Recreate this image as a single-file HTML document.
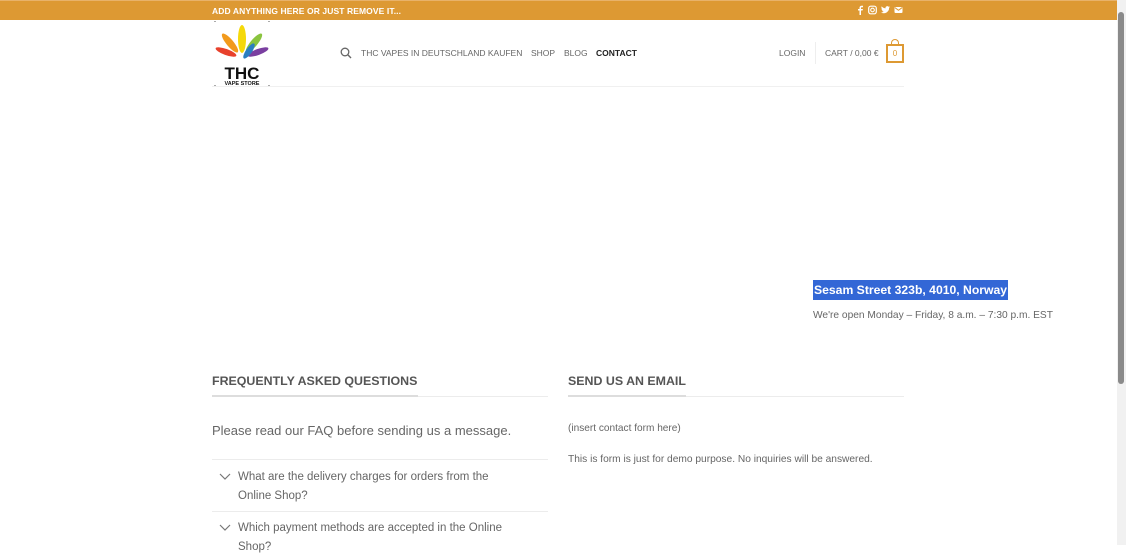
<!DOCTYPE html>
<html><head><meta charset="utf-8"><style>
*{margin:0;padding:0;box-sizing:border-box}
body{width:1126px;height:545px;overflow:hidden;background:#fff;font-family:"Liberation Sans",sans-serif;color:#777;position:relative}
.top{position:absolute;left:0;top:0;width:1117px;height:20px;background:#dd9933;border-top:1px solid #e8b26a}
.top .t{position:absolute;left:212px;top:5px;font-size:8.5px;font-weight:bold;color:#fff;letter-spacing:.1px}
.soc{position:absolute;left:856px;top:4px;display:flex;gap:4px}
.abs{position:absolute;white-space:nowrap}
.nav{font-size:8.5px;color:#666;top:48px}
.sb{position:absolute;left:1117px;top:0;width:9px;height:545px;background:#f1f1f1}
.sb i{position:absolute;left:1px;top:12px;width:6px;height:372px;background:#8a8a8a;border-radius:3px}
</style></head><body>
<div class="top"><div class="t">ADD ANYTHING HERE OR JUST REMOVE IT...</div>
<div class="soc">
<svg width="8" height="10" viewBox="0 0 8 10"><path d="M5 10V5.5h1.5L7 4H5V3c0-.5.2-.8.8-.8H7V.8C6.7.8 6.2.7 5.6.7 4.3.7 3.5 1.5 3.5 2.8V4H2v1.5h1.5V10z" fill="#fff"/></svg>
<svg width="9" height="10" viewBox="0 0 9 9"><rect x=".7" y=".7" width="7.6" height="7.6" rx="2" fill="none" stroke="#fff" stroke-width="1.2"/><circle cx="4.5" cy="4.5" r="1.8" fill="none" stroke="#fff" stroke-width="1.1"/></svg>
<svg width="9" height="10" viewBox="0 0 10 9"><path d="M10 1.2c-.4.2-.8.3-1.2.3.4-.3.8-.7.9-1.1-.4.2-.9.4-1.3.5A2 2 0 0 0 5 2.7C3.3 2.6 1.8 1.8.7.5c-.6 1-.2 2.2.6 2.7-.3 0-.6-.1-.9-.3 0 1 .7 1.8 1.6 2-.3.1-.6.1-.9 0 .3.8 1 1.400 1.9 1.4A4 4 0 0 1 0 7.1 5.8 5.8 0 0 0 9 2.2c.4-.3.7-.6 1-1z" fill="#fff"/></svg>
<svg width="9" height="10" viewBox="0 0 9 9"><rect x=".5" y="1.5" width="8" height="6" rx="1" fill="#fff"/><path d="M1 2.2l3.5 2.6L8 2.2" stroke="#dd9933" fill="none" stroke-width="1"/></svg>
</div></div>
<div class="abs" style="left:212px;top:21px;width:60px;height:66px">
<svg width="60" height="66" viewBox="0 0 60 66">
<path d="M2 0h2M56 0h2M2 65h2M56 65h2" stroke="#555"/>
<ellipse cx="30" cy="18" rx="4" ry="14" fill="#f5d90a"/>
<ellipse cx="18" cy="22" rx="3.5" ry="12" fill="#f29a1c" transform="rotate(-40 18 22)"/>
<ellipse cx="42" cy="22" rx="3.5" ry="12" fill="#8ac43f" transform="rotate(40 42 22)"/>
<ellipse cx="14" cy="31" rx="3" ry="11" fill="#e8412c" transform="rotate(-70 14 31)"/>
<ellipse cx="46" cy="31" rx="3" ry="11" fill="#7a3fa0" transform="rotate(70 46 31)"/>
<ellipse cx="37" cy="30" rx="3" ry="9" fill="#2b7ec1" transform="rotate(35 37 30)"/>
<text x="30" y="58" text-anchor="middle" font-family="Liberation Sans" font-weight="bold" font-size="17" fill="#111">THC</text>
<text x="30" y="64" text-anchor="middle" font-family="Liberation Sans" font-weight="bold" font-size="5.5" fill="#111">VAPE STORE</text>
</svg></div>
<svg class="abs" style="left:340px;top:47px" width="12" height="12" viewBox="0 0 12 12"><circle cx="5" cy="5" r="3.8" fill="none" stroke="#666" stroke-width="1.3"/><path d="M7.8 7.8L11 11" stroke="#666" stroke-width="1.4"/></svg>
<div class="abs nav" style="left:361px">THC VAPES IN DEUTSCHLAND KAUFEN</div>
<div class="abs nav" style="left:531px">SHOP</div>
<div class="abs nav" style="left:564px">BLOG</div>
<div class="abs nav" style="left:596px;color:#222;font-weight:bold">CONTACT</div>
<div class="abs nav" style="left:779px">LOGIN</div>
<div class="abs" style="left:815px;top:42px;width:1px;height:22px;background:#eee"></div>
<div class="abs nav" style="left:825px">CART / 0,00 €</div>
<div class="abs" style="left:886px;top:44px;width:18px;height:19px;border:2px solid #dd9933;font-size:8px;color:#dd9933;text-align:center;line-height:15px">0</div>
<div class="abs" style="left:891px;top:39px;width:8px;height:6px;border:1.5px solid #dd9933;border-bottom:none;border-radius:4px 4px 0 0"></div>
<div class="abs" style="left:212px;top:86px;width:692px;height:1px;background:#f0f0f0"></div>
<div class="abs" style="left:813px;top:280px;background:#3367d6;color:#fff;font-size:12.2px;font-weight:bold;padding:2px 1px;line-height:16px">Sesam Street 323b, 4010, Norway</div>
<div class="abs" style="left:813px;top:310px;font-size:10.2px;color:#666">We're open Monday – Friday, 8 a.m. – 7:30 p.m. EST</div>
<div class="abs" style="left:212px;top:374px;font-size:12.4px;font-weight:bold;color:#555">FREQUENTLY ASKED QUESTIONS</div>
<div class="abs" style="left:212px;top:396px;width:336px;height:1px;background:#ececec"></div>
<div class="abs" style="left:212px;top:395px;width:206px;height:2px;background:#ddd"></div>
<div class="abs" style="left:568px;top:374px;font-size:12.4px;font-weight:bold;color:#555">SEND US AN EMAIL</div>
<div class="abs" style="left:568px;top:396px;width:336px;height:1px;background:#ececec"></div>
<div class="abs" style="left:568px;top:395px;width:118px;height:2px;background:#ddd"></div>
<div class="abs" style="left:212px;top:423px;font-size:13px;color:#666">Please read our FAQ before sending us a message.</div>
<div class="abs" style="left:212px;top:459px;width:336px;height:1px;background:#ececec"></div>
<div class="abs" style="left:212px;top:511px;width:336px;height:1px;background:#ececec"></div>
<svg class="abs" style="left:219px;top:473px" width="12" height="8" viewBox="0 0 12 8"><path d="M1 1l5 5 5-5" fill="none" stroke="#777" stroke-width="1.2"/></svg>
<svg class="abs" style="left:219px;top:524px" width="12" height="8" viewBox="0 0 12 8"><path d="M1 1l5 5 5-5" fill="none" stroke="#777" stroke-width="1.2"/></svg>
<div class="abs" style="left:238px;top:468px;font-size:11.5px;line-height:18.5px;color:#666;white-space:normal;width:280px">What are the delivery charges for orders from the Online Shop?</div>
<div class="abs" style="left:238px;top:519px;font-size:11.5px;line-height:18.5px;color:#666;white-space:normal;width:280px">Which payment methods are accepted in the Online Shop?</div>
<div class="abs" style="left:568px;top:423px;font-size:10.1px;color:#666">(insert contact form here)</div>
<div class="abs" style="left:568px;top:454px;font-size:10.2px;color:#666">This is form is just for demo purpose. No inquiries will be answered.</div>
<div class="sb"><i></i></div>
</body></html>
